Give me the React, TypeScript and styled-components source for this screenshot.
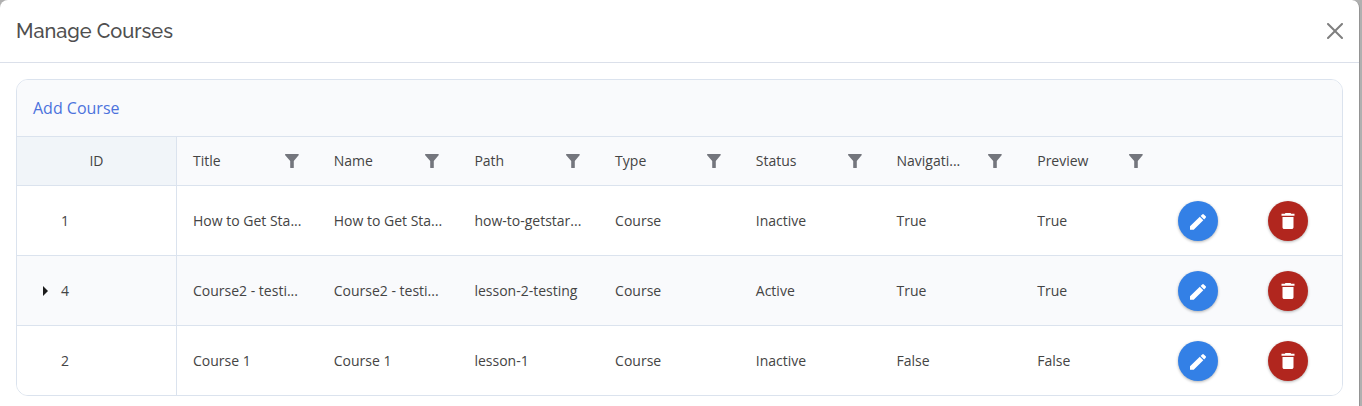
import React from 'react';
import styled, { createGlobalStyle } from 'styled-components';

const GlobalStyle = createGlobalStyle`
  *, *::before, *::after { box-sizing: border-box; }
  body {
    margin: 0;
    background: #b0b0b0;
    color: #444;
    font-family: 'Open Sans', sans-serif;
    font-size: 14px;
    line-height: 20px;
  }
  button { font: inherit; color: inherit; border: 0; padding: 0; background: none; cursor: pointer; }
`;

const Modal = styled.section`
  min-height: 100vh;
  margin-right: 2px;
  padding-bottom: 10px;
  background: #fff;
  border-right: 1px solid #949494;
  border-radius: 8px 8px 0 0;
`;

const ModalHeader = styled.header`
  display: flex;
  align-items: center;
  justify-content: space-between;
  height: 63px;
  padding: 0 16px;
  border-bottom: 1px solid #dbe0ea;
`;

const ModalTitle = styled.h1`
  margin: 0;
  font-family: Raleway, Lato, sans-serif;
  font-size: 20px;
  font-weight: 500;
  line-height: 30px;
  color: #4f4f4f;
`;

const CloseButton = styled.button`
  display: flex;
  color: #7f7f7f;
`;

const Grid = styled.div`
  margin: 16px 16px 0;
  border: 1px solid #dbe3ee;
  border-radius: 12px;
  overflow: hidden;
`;

const Toolbar = styled.div`
  display: flex;
  align-items: center;
  height: 56px;
  padding: 0 16px;
  background: #f9fafc;
`;

const AddLink = styled.a`
  font-size: 16px;
  line-height: 24px;
  color: #4c72dc;
  text-decoration: none;
`;

const Table = styled.table`
  width: 100%;
  table-layout: fixed;
  border-collapse: separate;
  border-spacing: 0;
`;

const Col = styled.col<{ $width?: number }>`
  width: ${({ $width }) => ($width ? `${$width}px` : 'auto')};
`;

const HeadCell = styled.th<{ $id?: boolean }>`
  height: 50px;
  padding: 0 16px;
  font-weight: 400;
  text-align: ${({ $id }) => ($id ? 'center' : 'left')};
  background: ${({ $id }) => ($id ? '#f1f5f9' : '#f9fafc')};
  border: solid #dbe3ee;
  border-width: 1px ${({ $id }) => ($id ? '1px' : '0')} 1px 0;
`;

const HeadContent = styled.div`
  display: flex;
  align-items: center;
  justify-content: space-between;
  padding-right: 3px;
  white-space: nowrap;
`;

const FilterButton = styled.button`
  display: flex;
  color: #74767d;
`;

const Row = styled.tr`
  background: #fff;
  &:nth-child(even) { background: #f9fafc; }
  &:last-child td { height: 69px; border-bottom: 0; }
`;

const Cell = styled.td<{ $id?: boolean }>`
  height: 70px;
  padding: 0 16px;
  white-space: nowrap;
  border: solid #dbe3ee;
  border-width: 0 ${({ $id }) => ($id ? '1px' : '0')} 1px 0;
`;

const IdContent = styled.div`
  display: grid;
  grid-template-columns: 28px 1fr;
  align-items: center;
`;

const ExpandButton = styled.button`
  grid-column: 1;
  display: flex;
  padding-left: 10px;
  color: #1c1c1c;
`;

const IdValue = styled.span`
  grid-column: 2;
`;

const RoundButton = styled.button<{ $tone: string }>`
  display: flex;
  align-items: center;
  justify-content: center;
  width: 40px;
  height: 40px;
  border-radius: 50%;
  color: #fff;
  background: ${({ $tone }) => $tone};
  box-shadow: 0 1px 3px rgba(0, 0, 0, 0.3);
`;

const FunnelIcon = () => (
  <svg width="14" height="14" viewBox="0 0 14 14" fill="currentColor" aria-hidden="true">
    <path d="M.6 0h12.600c.6 0 .8.7.4 1.200L8.800 7v6.500a.5.5 0 0 1-.5.5H5.700a.5.5 0 0 1-.5-.5V7L.2 1.200C-.2.700 0 0 .6 0z" />
  </svg>
);

const CloseIcon = () => (
  <svg width="16" height="16" viewBox="0 0 16 16" fill="currentColor" aria-hidden="true">
    <path d="M.293.293a1 1 0 0 1 1.414 0L8 6.586 14.293.293a1 1 0 1 1 1.414 1.414L9.414 8l6.293 6.293a1 1 0 0 1-1.414 1.414L8 9.414l-6.293 6.293a1 1 0 0 1-1.414-1.414L6.586 8 .293 1.707a1 1 0 0 1 0-1.414z" />
  </svg>
);

const PencilIcon = () => (
  <svg width="16" height="18" viewBox="0 -2 16 18" fill="currentColor" aria-hidden="true">
    <path d="M0 12.200 9.800 2.800 13.300 6.200 3.700 15.800H0zM10.600 2l1.600-1.600a1.200 1.200 0 0 1 1.600 0l1.900 1.900a1.200 1.200 0 0 1 0 1.500L14.100 5.400z" />
  </svg>
);

const TrashIcon = () => (
  <svg width="14" height="16" viewBox="0 0 14 16" fill="currentColor" aria-hidden="true">
    <path d="M4.500 0h5l.7.800H13.500v1.900H.5V.800h3.300zM1.500 4h11v10.200c0 1-.8 1.800-1.800 1.800H3.300c-1 0-1.800-.8-1.800-1.800z" />
  </svg>
);

const CaretIcon = () => (
  <svg width="5" height="10" viewBox="0 0 5 10" fill="currentColor" aria-hidden="true">
    <path d="M0 0 5 5 0 10z" />
  </svg>
);

const columns = ['Title', 'Name', 'Path', 'Type', 'Status', 'Navigati...', 'Preview'];

const courses = [
  { id: 1, expandable: false, values: ['How to Get Sta...', 'How to Get Sta...', 'how-to-getstar...', 'Course', 'Inactive', 'True', 'True'] },
  { id: 4, expandable: true, values: ['Course2 - testi...', 'Course2 - testi...', 'lesson-2-testing', 'Course', 'Active', 'True', 'True'] },
  { id: 2, expandable: false, values: ['Course 1', 'Course 1', 'lesson-1', 'Course', 'Inactive', 'False', 'False'] },
];

export default function App() {
  return (
    <>
      <GlobalStyle />
      <Modal role="dialog" aria-labelledby="dialog-title">
        <ModalHeader>
          <ModalTitle id="dialog-title">Manage Courses</ModalTitle>
          <CloseButton type="button" aria-label="Close"><CloseIcon /></CloseButton>
        </ModalHeader>
        <Grid>
          <Toolbar><AddLink href="#add">Add Course</AddLink></Toolbar>
          <Table>
            <colgroup>
              <Col $width={160} />
              {columns.map((name) => <Col key={name} />)}
              <Col $width={90} />
              <Col $width={90} />
            </colgroup>
            <thead>
              <tr>
                <HeadCell scope="col" $id>ID</HeadCell>
                {columns.map((name) => (
                  <HeadCell scope="col" key={name}>
                    <HeadContent>
                      <span>{name}</span>
                      <FilterButton type="button" aria-label="Filter"><FunnelIcon /></FilterButton>
                    </HeadContent>
                  </HeadCell>
                ))}
                <HeadCell scope="col" aria-label="Edit" />
                <HeadCell scope="col" aria-label="Delete" />
              </tr>
            </thead>
            <tbody>
              {courses.map(({ id, expandable, values }) => (
                <Row key={id}>
                  <Cell $id>
                    <IdContent>
                      {expandable && <ExpandButton type="button" aria-label="Expand"><CaretIcon /></ExpandButton>}
                      <IdValue>{id}</IdValue>
                    </IdContent>
                  </Cell>
                  {values.map((value, i) => <Cell key={columns[i]}>{value}</Cell>)}
                  <Cell><RoundButton type="button" aria-label="Edit" $tone="#3380e6"><PencilIcon /></RoundButton></Cell>
                  <Cell><RoundButton type="button" aria-label="Delete" $tone="#b1261e"><TrashIcon /></RoundButton></Cell>
                </Row>
              ))}
            </tbody>
          </Table>
        </Grid>
      </Modal>
    </>
  );
}
